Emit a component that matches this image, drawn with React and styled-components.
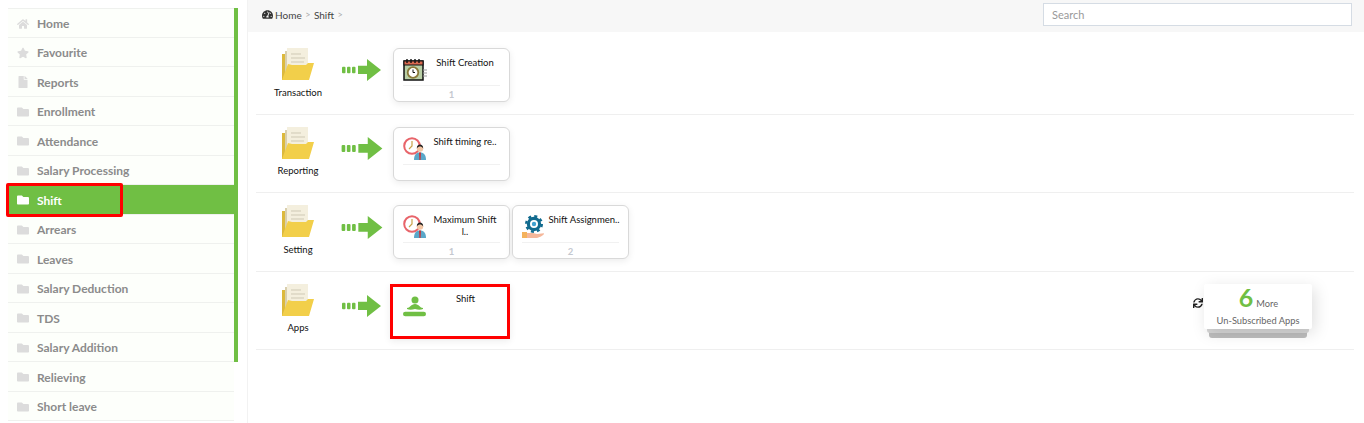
import React from 'react';
import styled, { createGlobalStyle } from 'styled-components';
import { FaHome, FaStar, FaFile, FaFolder, FaTachometerAlt, FaSync } from 'react-icons/fa';

const Global = createGlobalStyle`
  html, body { margin: 0; padding: 0; background: #fff; height: 423px; overflow: hidden; }
  * { box-sizing: border-box; }
  body { font-family: Lato, "Liberation Sans", sans-serif; }
`;

const Page = styled.div`
  display: flex;
  width: 1364px;
  height: 423px;
  overflow: hidden;
`;
const Sidebar = styled.aside`
  width: 248px;
  flex: none;
  padding: 8px 0 0 8px;
  border-right: 1px solid #f2f2f2;
  position: relative;
`;
const SideList = styled.ul`
  list-style: none;
  margin: 0;
  padding: 0;
  width: 226px;
  position: relative;
`;
const GreenBar = styled.div`
  position: absolute;
  left: 226px;
  top: 0;
  width: 4px;
  height: 354px;
  background: #70bf44;
`;
const SideItem = styled.li`
  height: 29.5px;
  display: flex;
  align-items: center;
  gap: 8px;
  padding: 2px 0 0 9px;
  border-bottom: 1px solid #eff1ee;
  background: ${p => (p.$active ? '#70bf44' : '#fdfffb')};
  color: ${p => (p.$active ? '#fff' : '#8b8b8b')};
  font-size: 12px;
  font-weight: 700;
  width: ${p => (p.$active ? '230px' : '226px')};
  &:first-of-type { border-top: 1px solid #eff1ee; }
  svg { flex: none; width: 12px; height: 12px; color: ${p => (p.$active ? '#fff' : '#dcdcdc')}; }
`;
const SideRedBox = styled.div`
  position: absolute;
  left: 6px;
  top: 183px;
  width: 117px;
  height: 34px;
  border: 3px solid #f00;
  border-radius: 2px;
  pointer-events: none;
`;
const Main = styled.main`
  flex: 1;
  min-width: 0;
  display: flex;
  flex-direction: column;
`;
const TopBar = styled.header`
  height: 32px;
  flex: none;
  background: #f7f7f7;
  display: flex;
  align-items: center;
  justify-content: space-between;
  padding: 0 12px 3px 14px;
`;
const Crumbs = styled.nav`
  display: flex;
  align-items: center;
  font-size: 10px;
  color: #444;
  svg { width: 11px; height: 11px; color: #333; margin-right: 2px; }
`;
const Sep = styled.span`
  color: #aaa;
  font-size: 9px;
  margin: 0 3.5px;
`;
const Search = styled.input`
  width: 309px;
  height: 23px;
  border: 1px solid #d5dce4;
  background: #fff;
  padding: 0 8px;
  font-family: inherit;
  font-size: 11px;
  outline: none;
  &::placeholder { color: #999; opacity: 1; }
`;
const Rows = styled.section`
  padding: 4px 10px 0 8px;
`;
const Row = styled.div`
  height: 78.5px;
  border-bottom: 1px solid #efefef;
  display: flex;
  align-items: flex-start;
  padding-top: 12px;
  position: relative;
`;
const FolderCol = styled.div`
  width: 84px;
  flex: none;
  display: flex;
  flex-direction: column;
  align-items: center;
  gap: 6.5px;
  font-size: 9.5px;
  color: #111;
  svg { display: block; }
`;
const ArrowWrap = styled.div`
  width: 53px;
  flex: none;
  padding: ${p => (p.$big ? '10.6px 0 0 1px' : '11px 0 0 2px')};
  svg { display: block; }
`;
const Cards = styled.div`
  display: flex;
  gap: 2px;
`;
const Card = styled.div`
  width: 117px;
  height: 54px;
  background: #fff;
  border: 1px solid #d9d9d9;
  border-radius: 6px;
  box-shadow: 0 2px 7px rgba(0, 0, 0, 0.08);
  padding: 8px 9px 0;
  display: flex;
  flex-direction: column;
`;
const CardTop = styled.div`
  height: 29px;
  display: flex;
  border-bottom: 1px solid #f1f1f1;
  svg { flex: none; display: block; }
`;
const CardTitle = styled.div`
  flex: 1;
  margin-right: -3px;
  text-align: center;
  font-size: 9.5px;
  line-height: 12px;
  color: #111;
  white-space: pre-line;
`;
const CardCount = styled.div`
  text-align: center;
  font-size: 9.5px;
  font-weight: 700;
  color: #c4c8cf;
  padding-top: 3px;
`;
const PlainCard = styled.div`
  width: 120px;
  height: 55px;
  margin-left: -3px;
  background: #fff;
  border: 3px solid #f00;
  box-shadow: 0 2px 7px rgba(0, 0, 0, 0.08);
  display: flex;
  padding: 6px 6px 0 10px;
  svg { flex: none; display: block; margin-top: 3px; }
`;
const More = styled.div`
  position: absolute;
  left: 948px;
  top: 12px;
  width: 108px;
  height: 45px;
  background: #fff;
  box-shadow: 3px 4px 16px rgba(0, 0, 0, 0.13);
  border-radius: 2px;
  text-align: center;
  color: #666;
  font-size: 9.3px;
  padding-top: 1px;
  z-index: 1;
`;
const MoreCount = styled.span`
  font-size: 25px;
  line-height: 24px;
  font-weight: 700;
  color: #70bf44;
  margin-right: 3px;
`;
const MoreLine = styled.div`
  height: 24px;
  line-height: 24px;
  display: flex;
  align-items: baseline;
  justify-content: center;
  padding-left: 1px;
`;
const MoreSub = styled.div`
  margin-top: 6px;
`;
const Stack = styled.div`
  position: absolute;
  height: ${p => p.$h}px;
  left: ${p => p.$l}px;
  width: ${p => p.$w}px;
  top: 57px;
  background: ${p => p.$c};
  border-radius: 0 0 3px 3px;
`;
const Refresh = styled.div`
  position: absolute;
  left: 937px;
  top: 26px;
  line-height: 0;
  svg { width: 10px; height: 10px; color: #222; }
`;

const Folder = () => (
  <svg width="32" height="32" viewBox="0 0 32 32">
    <path d="M0 32V6h4v26z" fill="#dcb93d" />
    <path d="M3 3h5v22H3z" fill="#d9cfae" />
    <path d="M5 0h21v24H5z" fill="#f4efde" />
    <path d="M9 6h10M9 10h14M9 14h13" stroke="#cfc9b5" strokeWidth="1" />
    <path d="M0 32L6 16l4 1h14l2-2h6l-5 17z" fill="#f2cf4a" />
  </svg>
);
const Arrow = ({ big }) => (
  <svg width={big ? 42 : 39} height={big ? 23 : 22} viewBox="0 0 39 22">
    <g fill="#70bf44">
      <rect x="0" y="7.700" width="3.500" height="6.600" rx="1" />
      <rect x="5" y="7.700" width="3.500" height="6.600" rx="1" />
      <rect x="10" y="7.700" width="3.500" height="6.600" rx="1" />
      <path d="M16 6.700h9V0l14 11-14 11v-7h-9z" />
    </g>
  </svg>
);
const Calendar = () => (
  <svg width="24" height="24" viewBox="0 0 24 24">
    <rect x="1" y="4" width="19" height="19" fill="#b9cfa6" stroke="#111" strokeWidth="1.500" />
    <rect x="1" y="4" width="19" height="4" fill="#d9694f" stroke="#111" strokeWidth="1" />
    <path d="M4 2v4M8 2v4M12 2v4M16 2v4" stroke="#111" strokeWidth="1.400" />
    <circle cx="10" cy="15.500" r="5.300" fill="#fff" stroke="#8a7a3a" strokeWidth="1.800" />
    <path d="M10 12.500v3h2" stroke="#111" fill="none" />
    <path d="M20 13h4M20 16h4M20 19h4" stroke="#999" strokeWidth="1.200" />
  </svg>
);
const ClockPerson = () => (
  <svg width="24" height="24" viewBox="0 0 24 24">
    <circle cx="9" cy="10" r="7.800" fill="#fff" stroke="#e8646a" strokeWidth="2" />
    <path d="M9 5v5l-3 3" stroke="#c9a24a" strokeWidth="1.200" fill="none" />
    <path d="M11 24c0-6 3-7.500 6-7.500s6 1.500 6 7.500z" fill="#5aa7c9" />
    <path d="M16 16.500h2l-.400 7.500h-1.200z" fill="#c8343b" />
    <circle cx="17" cy="12.500" r="3.200" fill="#f3c6a5" />
    <path d="M13.800 12.500c0-3 1.500-4 3.200-4s3.200 1 3.200 4c-1-1.500-2-2-3.200-2s-2.200.5-3.200 2z" fill="#222" />
  </svg>
);
const GearHand = () => (
  <svg width="24" height="24" viewBox="0 0 24 24">
    <g transform="translate(12 10)">
      <circle r="5.600" fill="none" stroke="#116a8e" strokeWidth="3.200" />
      <circle r="7.800" fill="none" stroke="#116a8e" strokeWidth="2.400" strokeDasharray="3 3.130" />
      <circle r="2.200" fill="#3ea0cf" />
    </g>
    <path d="M0 18h5v6H0z" fill="#f4b25c" />
    <path d="M5 19h6l4 1 7-.8c0 2-3 3.300-7 4.800H5z" fill="#f5b79a" />
  </svg>
);
const Person = () => (
  <svg width="24" height="24" viewBox="0 0 24 24">
    <g fill="#70bf44">
      <circle cx="12" cy="4" r="3.500" />
      <path d="M4 12c3 0 4-4 8-4s5 4 8 4v1c-2 1-5 1-8 0-3 1-6 1-8 0z" />
      <rect x="0" y="15.700" width="23" height="4.500" rx="2.250" />
    </g>
  </svg>
);

const side = [
  ['Home', FaHome], ['Favourite', FaStar], ['Reports', FaFile], ['Enrollment', FaFolder],
  ['Attendance', FaFolder], ['Salary Processing', FaFolder], ['Shift', FaFolder, true],
  ['Arrears', FaFolder], ['Leaves', FaFolder], ['Salary Deduction', FaFolder], ['TDS', FaFolder],
  ['Salary Addition', FaFolder], ['Relieving', FaFolder], ['Short leave', FaFolder],
];

const rows = [
  { name: 'Transaction', cards: [{ icon: Calendar, title: 'Shift Creation', count: '1' }] },
  { name: 'Reporting', big: true, cards: [{ icon: ClockPerson, title: 'Shift timing re..', count: '' }] },
  { name: 'Setting', big: true, cards: [
    { icon: ClockPerson, title: 'Maximum Shift\nl..', count: '1' },
    { icon: GearHand, title: 'Shift Assignmen..', count: '2' },
  ] },
];

export default function App() {
  return (
    <Page>
      <Global />
      <Sidebar>
        <SideList>
          <GreenBar />
          {side.map(([label, Icon, active]) => (
            <SideItem key={label} $active={active}><Icon />{label}</SideItem>
          ))}
        </SideList>
        <SideRedBox />
      </Sidebar>
      <Main>
        <TopBar>
          <Crumbs>
            <FaTachometerAlt />Home<Sep>&gt;</Sep>Shift<Sep>&gt;</Sep>
          </Crumbs>
          <Search placeholder="Search" />
        </TopBar>
        <Rows>
          {rows.map(r => (
            <Row key={r.name}>
              <FolderCol><Folder />{r.name}</FolderCol>
              <ArrowWrap $big={r.big}><Arrow big={r.big} /></ArrowWrap>
              <Cards>
                {r.cards.map(c => (
                  <Card key={c.title}>
                    <CardTop><c.icon /><CardTitle>{c.title}</CardTitle></CardTop>
                    <CardCount>{c.count}</CardCount>
                  </Card>
                ))}
              </Cards>
            </Row>
          ))}
          <Row>
            <FolderCol><Folder />Apps</FolderCol>
            <ArrowWrap><Arrow /></ArrowWrap>
            <PlainCard><Person /><CardTitle>Shift</CardTitle></PlainCard>
            <Refresh><FaSync /></Refresh>
            <Stack $l={953} $w={98} $h={9} $c="#bdbdbd" />
            <Stack $l={951} $w={102} $h={4} $c="#d6d6d6" />
            <More>
              <MoreLine><MoreCount>6</MoreCount>More</MoreLine>
              <MoreSub>Un-Subscribed Apps</MoreSub>
            </More>
          </Row>
        </Rows>
      </Main>
    </Page>
  );
}
